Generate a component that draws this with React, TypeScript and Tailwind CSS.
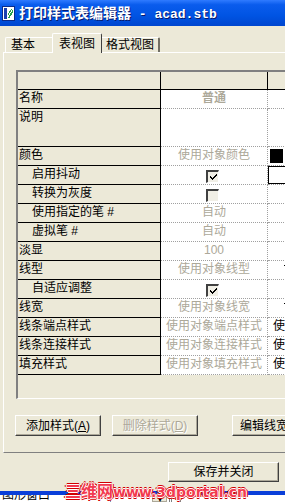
import React from 'react';

type Extra = 'black' | 'box' | 'dash' | 'shi';

interface StyleRow {
  label: string;
  indent?: boolean;
  value?: string;
  bold?: boolean;
  check?: boolean;
  tall?: boolean;
  extra?: Extra;
}

const rows: StyleRow[] = [
  { label: '名称', value: '普通', bold: true },
  { label: '说明', tall: true },
  { label: '颜色', value: '使用对象颜色', extra: 'black' },
  { label: '启用抖动', indent: true, check: true, extra: 'box' },
  { label: '转换为灰度', indent: true, check: false },
  { label: '使用指定的笔 #', indent: true, value: '自动' },
  { label: '虚拟笔 #', indent: true, value: '自动' },
  { label: '淡显', value: '100' },
  { label: '线型', value: '使用对象线型', extra: 'dash' },
  { label: '自适应调整', indent: true, check: true },
  { label: '线宽', value: '使用对象线宽', extra: 'dash' },
  { label: '线条端点样式', value: '使用对象端点样式', extra: 'shi' },
  { label: '线条连接样式', value: '使用对象连接样式', extra: 'shi' },
  { label: '填充样式', value: '使用对象填充样式', extra: 'shi' },
];

function CheckBox({ checked }: { checked: boolean }) {
  return (
    <div className="mt-[3px] -ml-[3px] w-[13px] h-[13px] border-t-2 border-l-2 border-t-[#404040] border-l-[#404040] border-b border-r border-b-white border-r-white bg-[#f1efe6] flex items-center justify-center">
      {checked && (
        <svg width="9" height="9" viewBox="0 0 9 9" shapeRendering="crispEdges">
          <path d="M1 3h1v1h1v1h1V4h1V3h1V2h1V1h1v2H7v1H6v1H5v1H4v1H3V6H2V5H1z" fill="#000" />
        </svg>
      )}
    </div>
  );
}

function Extra({ kind }: { kind?: Extra }) {
  if (kind === 'black') return <div className="ml-[2px] mt-[2px] w-[13px] h-[14px] bg-black" />;
  if (kind === 'box') return <div className="w-full h-[18px] border border-black bg-white" />;
  if (kind === 'dash') return <div className="ml-[16px] mt-[4px] w-[3px] h-px bg-black" />;
  if (kind === 'shi') return <span className="ml-[5px] pt-px text-black">使</span>;
  return null;
}

function Button({ label, hot, disabled, width }: { label: string; hot: string; disabled?: boolean; width: string }) {
  return (
    <div
      className={`${width} h-[21px] shrink-0 flex items-center justify-center border border-t-white border-l-white border-r-[#404040] border-b-[#404040] shadow-[inset_-1px_-1px_0_#aca899] ${
        disabled ? 'text-[#aca899] [text-shadow:1px_1px_0_#fff]' : 'text-black'
      }`}
    >
      {label}(<span className="underline">{hot}</span>)
    </div>
  );
}

export default function App() {
  return (
    <div className="relative w-[285px] h-[502px] overflow-hidden bg-[#ECE9D8] flex flex-col text-[12px] leading-[14px] font-['Liberation_Sans','Noto_Sans_CJK_SC',sans-serif]">
      {/* title bar */}
      <div className="h-[26px] shrink-0 flex items-center gap-[4px] pl-[2px] bg-[linear-gradient(180deg,#2f7bff_0%,#0a5ced_18%,#0054e3_60%,#0046cf_100%)]">
        <svg width="13" height="15" viewBox="0 0 13 15" shapeRendering="crispEdges">
          <rect x="0.5" y="0.5" width="12" height="14" fill="#fff" stroke="#0b2a8a" />
          <rect x="2" y="2" width="3" height="11" fill="#1a3fb0" />
          <path d="M6 12 L11 3 L11 6 L7.5 12 Z" fill="#27a24a" />
          <path d="M6 8 L9 3 L10 3 L6 10 Z" fill="#27a24a" />
        </svg>
        <span className="text-white font-bold text-[14px] [text-shadow:1px_1px_0_#0a1a6a] whitespace-pre font-['Noto_Sans_CJK_SC',sans-serif]">
          打印样式表编辑器
          <span className="text-[13px] font-['Liberation_Mono','Noto_Sans_CJK_SC',monospace]"> - acad.stb</span>
        </span>
      </div>

      {/* tabs */}
      <div className="h-[26px] shrink-0 flex items-end pl-[5px] relative z-10">
        <div className="w-[47px] h-[15px] border-t border-l border-white rounded-tl-[2px] pl-[5px] text-black">基本</div>
        <div className="w-[50px] h-[20px] -mb-px bg-[#ECE9D8] border-t border-l border-white border-r border-r-[#404040] rounded-t-[2px] flex justify-center pt-[3px] text-black">表视图</div>
        <div className="w-[58px] h-[15px] border-t border-white border-r-2 border-r-[#716f64] rounded-tr-[2px] flex justify-center text-black">格式视图</div>
      </div>

      {/* tab page */}
      <div className="ml-[3px] w-[300px] h-[401px] shrink-0 border-l border-t border-white border-b border-b-[#808080] pt-[17px] pl-[12px] flex flex-col">
        <div className="w-[290px] h-[329px] shrink-0 border-t-2 border-l-2 border-t-[#808080] border-l-[#808080] border-b border-b-white flex flex-col">
          <div className="h-[18px] flex shrink-0">
            <div className="w-[143px] border-r border-b border-black" />
            <div className="w-[107px] border-r border-b border-black" />
            <div className="flex-1 border-b border-black" />
          </div>
          {rows.map((r) => (
            <div key={r.label} className={`${r.tall ? 'h-[38px]' : 'h-[19px]'} flex shrink-0`}>
              <div className={`w-[143px] border-r border-b border-black pt-px text-black whitespace-pre ${r.indent ? 'pl-[14px]' : 'pl-px'}`}>
                {r.label}
              </div>
              <div className="w-[107px] bg-white border-r border-b border-dotted border-[#a0a0a0] flex justify-center pt-px text-[#aca899]">
                {r.check !== undefined ? <CheckBox checked={r.check} /> : <span className={r.bold ? 'font-bold' : ''}>{r.value}</span>}
              </div>
              <div className="flex-1 bg-white border-b border-dotted border-[#a0a0a0] flex items-start">
                <Extra kind={r.extra} />
              </div>
            </div>
          ))}
        </div>

        <div className="mt-[16px] flex gap-[11px] -ml-px">
          <Button label="添加样式" hot="A" width="w-[86px]" />
          <Button label="删除样式" hot="D" width="w-[86px]" disabled />
          <div className="ml-[23px] w-[90px] h-[21px] shrink-0 flex items-center pl-[7px] border border-t-white border-l-white border-r-[#404040] border-b-[#404040] shadow-[inset_-1px_-1px_0_#aca899] text-black whitespace-nowrap">
            编辑线宽...
          </div>
        </div>
      </div>

      {/* bottom button */}
      <div className="mt-[9px] ml-[168px] w-[111px] h-[20px] shrink-0 flex items-center justify-center border border-t-white border-l-white border-r-[#404040] border-b-[#404040] shadow-[inset_-1px_-1px_0_#aca899] text-black">
        保存并关闭
      </div>

      <div className="h-[9px] shrink-0" />
      <div className="h-[4px] shrink-0 bg-[#0a3fd9]" />
      <div className="flex-1 bg-white flex items-start overflow-hidden">
        <div className="w-[110px] -mt-[7px] pl-[2px] text-black">图形窗口</div>
        <div className="w-[42px] h-full border-t border-l border-[#7f9db9] bg-white" />
        <div className="w-[15px] h-full bg-[#ECE9D8] border border-[#aca899] flex justify-center text-[8px] leading-[8px] text-black">▾</div>
        <div className="ml-[2px] w-[3px] h-full border-l border-r border-[#808080]" />
        <div className="ml-[8px] w-[3px] h-full border-l border-[#808080]" />
      </div>

      {/* watermark */}
      <div className="absolute left-[65px] top-[481px] flex items-baseline font-bold text-[#f23a4f] whitespace-nowrap [text-shadow:1px_0_0_#fff,-1px_0_0_#fff,0_1px_0_#fff,0_-1px_0_#fff,2px_0_0_#d10000,-2px_0_0_#d10000,0_2px_0_#d10000,0_-2px_0_#d10000]">
        <span className="text-[16px] leading-[18px] font-['Noto_Sans_CJK_SC',sans-serif]">三维网</span>
        <span className="text-[14px] leading-[18px] font-['DejaVu_Sans',sans-serif]">www.3dportal.cn</span>
      </div>
    </div>
  );
}
